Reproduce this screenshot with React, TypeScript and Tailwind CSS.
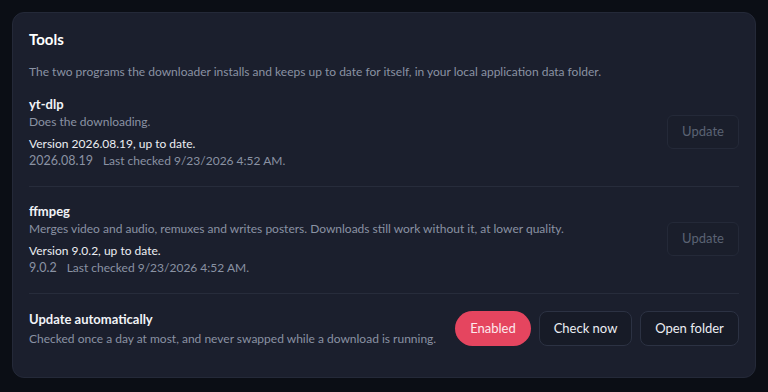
const FONT = "font-['Lato','Noto_Sans',sans-serif]";

interface Tool {
  name: string;
  description: string;
  version: string;
  checked: string;
}

const tools: Tool[] = [
  {
    name: "yt-dlp",
    description: "Does the downloading.",
    version: "2026.08.19",
    checked: "9/23/2026 4:52 AM",
  },
  {
    name: "ffmpeg",
    description:
      "Merges video and audio, remuxes and writes posters. Downloads still work without it, at lower quality.",
    version: "9.0.2",
    checked: "9/23/2026 4:52 AM",
  },
];

function ToolRow({ tool }: { tool: Tool }) {
  return (
    <div className="flex items-center justify-between border-b border-[#272c3b] pt-[15px] pb-[17px]">
      <div className="flex flex-col">
        <div className="text-[13px] leading-[19px] font-bold text-[#f1f3f7]">
          {tool.name}
        </div>
        <div className="text-[12px] leading-[16px] text-[#8a92a3]">
          {tool.description}
        </div>
        <div className="mt-1.5 text-[12px] leading-[16px] text-[#eceef3]">
          Version {tool.version}, up to date.
        </div>
        <div className="mt-px flex h-4 items-baseline gap-2.5 leading-[16px] text-[#8a92a3]">
          <span className="text-[12.5px] leading-[16px]">{tool.version}</span>
          <span className="text-[12px] leading-[16px]">Last checked {tool.checked}.</span>
        </div>
      </div>
      {/* disabled: already up to date */}
      <button className="h-[34px] w-[72px] rounded-md border border-[#242938] bg-[#1a1e2b] text-[13px] text-[#5b6374]">
        Update
      </button>
    </div>
  );
}

export default function App() {
  return (
    <div className={`${FONT} min-h-[392px] w-full bg-[#0b0e15] px-3 pt-3 pb-3`}>
      <section className="rounded-xl border border-[#242938] bg-[#1b1f2d] px-4 pt-4 pb-[14px]">
        <h2 className="text-[15px] leading-[20px] font-bold text-white">Tools</h2>
        <p className="mt-[15px] text-[12px] leading-[16px] text-[#8a92a3]">
          The two programs the downloader installs and keeps up to date for itself, in your local
          application data folder.
        </p>

        {tools.map((t) => (
          <ToolRow key={t.name} tool={t} />
        ))}

        <div className="flex items-center justify-between py-4">
          <div className="flex flex-col">
            <div className="text-[13px] leading-[19px] font-bold text-[#f1f3f7]">
              Update automatically
            </div>
            <div className="mt-0.5 whitespace-nowrap text-[12px] leading-[16px] text-[#8a92a3]">
              Checked once a day at most, and never swapped while a download is running.
            </div>
          </div>
          <div className="flex items-center gap-2">
            <button className="h-[35px] w-[76px] rounded-full bg-[#e5455f] text-[13px] text-[#fde9ed]">
              Enabled
            </button>
            <button className="h-[35px] w-[93px] rounded-lg border border-[#2c3243] bg-[#171b27] text-[13px] text-[#eceef3]">
              Check now
            </button>
            <button className="h-[35px] w-[99px] rounded-lg border border-[#2c3243] bg-[#171b27] text-[13px] text-[#eceef3]">
              Open folder
            </button>
          </div>
        </div>
      </section>
    </div>
  );
}
